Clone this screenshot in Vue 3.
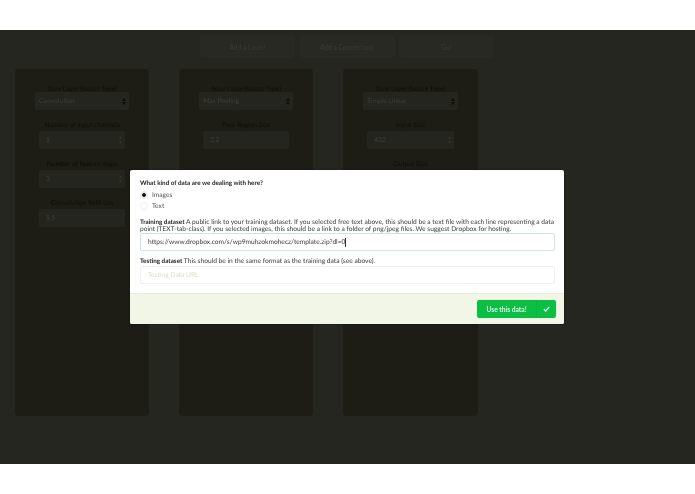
<template>
  <div class="shot">
    <div class="page">
      <nav class="toolbar">
        <button v-for="b in toolbar" :key="b" class="tool-btn">{{ b }}</button>
      </nav>

      <div class="panels">
        <section v-for="p in panels" :key="p.type" class="panel">
          <div class="label">New Layer (Select Type)</div>
          <div class="select">
            <span>{{ p.type }}</span>
            <svg width="4" height="7" viewBox="0 0 4 7"><path d="M2 0l2 3H0zM2 7L0 4h4z" fill="#0e0e09" /></svg>
          </div>
          <template v-for="f in p.fields" :key="f.label">
            <div class="label field-label">{{ f.label }}</div>
            <div class="input">
              <span>{{ f.value }}</span>
              <svg v-if="f.spin" width="3" height="8" viewBox="0 0 3 8"><path d="M1.5 0.5l1.5 2H0zM1.5 7.5L0 5.5h3z" fill="#3a3a35" /></svg>
            </div>
          </template>
        </section>
      </div>

      <div class="modal">
        <div class="modal-body">
          <div class="question">What kind of data are we dealing with here?</div>
          <label class="radio"><span class="dot on"></span>Images</label>
          <label class="radio"><span class="dot"></span>Text</label>

          <p class="help first"><b>Training dataset</b> A public link to your training dataset. If you selected free text above, this should be a text file with each line representing a data point (TEXT-tab-class). If you selected images, this should be a link to a folder of png/jpeg files. We suggest Dropbox for hosting.</p>
          <div class="url focus">https://www.dropbox.com/s/wp9muhzokmohecz/template.zip?dl=0<i class="caret"></i></div>

          <p class="help"><b>Testing dataset</b> This should be in the same format as the training data (see above).</p>
          <div class="url empty">Testing Data URL</div>
        </div>
        <footer class="modal-foot">
          <button class="use-btn">
            <span class="use-text">Use this data!</span>
            <span class="use-icon">
              <svg width="7" height="6" viewBox="0 0 7 6"><path d="M0.8 3.1L2.7 5L6.2 1" fill="none" stroke="#e8f8ec" stroke-width="1.4" /></svg>
            </span>
          </button>
        </footer>
      </div>
    </div>
  </div>
</template>

<script setup>
const toolbar = ['Add a Layer!', 'Add a Connection!', 'Go!']

const panels = [
  {
    type: 'Convolution',
    fields: [
      { label: 'Number of input channels', value: '1', spin: true },
      { label: 'Number of feature maps', value: '3', spin: true },
      { label: 'Convolution field size', value: '5,5' }
    ]
  },
  {
    type: 'Max Pooling',
    fields: [{ label: 'Pool Region Size', value: '2,2' }]
  },
  {
    type: 'Simple Linear',
    fields: [
      { label: 'Input Size', value: '432', spin: true },
      { label: 'Output Size', value: '', spin: false }
    ]
  }
]
</script>

<style>
html, body {
  margin: 0;
  background: #fff;
}
</style>

<style scoped>
.shot {
  width: 695px;
  height: 494px;
  padding: 30px 0;
  box-sizing: border-box;
  font-family: Lato, 'Liberation Sans', sans-serif;
  text-rendering: geometricPrecision;
  overflow: hidden;
}

.page {
  position: relative;
  height: 434px;
  background: #25261f;
  color: #3f3f38;
  font-size: 6.65px;
  filter: blur(0.3px);
}

.toolbar {
  display: flex;
  gap: 4.5px;
  padding: 5px 0 0 200px;
  height: 34px;
  box-sizing: border-box;
}

.tool-btn {
  width: 95px;
  height: 23px;
  padding: 0;
  border: none;
  border-radius: 2px;
  background: #282922;
  color: #3b3b33;
  font: inherit;
}

.panels {
  display: flex;
  gap: 29.8px;
  padding: 5px 0 0 15px;
}

.panel {
  width: 134.33px;
  height: 347px;
  box-sizing: border-box;
  padding-top: 16px;
  border-radius: 4px;
  background: #1d1c15;
}

.label {
  height: 7px;
  line-height: 7px;
  padding-top: 1px;
  margin-bottom: -1px;
  text-align: center;
  color: #0e0e09;
}

.select {
  display: flex;
  align-items: center;
  justify-content: space-between;
  height: 18px;
  margin: 0 20px;
  padding: 0 3px 0 4px;
  border-radius: 2px;
  background: #25251f;
}

.field-label {
  margin-top: 11px;
}

.input {
  display: flex;
  align-items: center;
  justify-content: space-between;
  height: 18px;
  margin: 3px 24px 0;
  padding: 0 3px 0 7px;
  border-radius: 2px;
  background: #25251f;
}

.modal {
  position: absolute;
  left: 130px;
  top: 140px;
  width: 434px;
  height: 154px;
  display: flex;
  flex-direction: column;
  border-radius: 2px;
  background: #fff;
  color: #555;
  box-shadow: 0 0 2px rgba(0, 0, 0, 0.6);
  overflow: hidden;
}

.modal-body {
  flex: 1;
  padding: 10px 9px 0 10px;
}

.question {
  font-size: 6.3px;
  font-weight: 700;
  line-height: 8px;
  color: #222;
}

.radio {
  display: flex;
  align-items: center;
  height: 11.5px;
  color: #555;
}

.question + .radio {
  margin-top: 1px;
}

.dot {
  flex: none;
  width: 8px;
  height: 8px;
  box-sizing: border-box;
  margin-right: 4px;
  border: 1px solid #f0f2e4;
  border-radius: 50%;
  background: #fff;
}

.dot.on {
  border-color: #e8e8e8;
  background: radial-gradient(circle, #111 0 1.5px, #eee 2.2px);
}

.help {
  margin: 0;
  line-height: 7px;
  color: #3c3c3c;
}

.help.first {
  margin-top: 7px;
}

.help b {
  font-size: 6.3px;
  color: #222;
}

.url {
  display: flex;
  align-items: center;
  height: 18px;
  box-sizing: border-box;
  border: 1px solid #f0f0f0;
  border-radius: 2px;
  padding: 0 7px;
  margin-top: 1px;
  color: #3c3c3c;
}

.url.focus {
  margin: 0 0 7px;
  border-color: #cfe3e3;
}

.url.empty {
  color: #dcdcc8;
}

.caret {
  width: 1px;
  height: 9px;
  background: #333;
}

.modal-foot {
  display: flex;
  justify-content: flex-end;
  align-items: center;
  height: 31px;
  padding-right: 8px;
  background: #f2f6e6;
  border-top: 1px solid #e6ead8;
  box-sizing: border-box;
}

.use-btn {
  display: flex;
  align-items: stretch;
  width: 79px;
  height: 18px;
  padding: 0;
  border: none;
  border-radius: 2px;
  background: #0bbf45;
  color: #dff6e5;
  font: 700 6.65px Lato, 'Liberation Sans', sans-serif;
}

.use-text {
  flex: 1;
  line-height: 18px;
  text-align: center;
}

.use-icon {
  display: flex;
  align-items: center;
  justify-content: center;
  width: 19px;
  border-left: 1px solid rgba(0, 0, 0, 0.05);
}
</style>
